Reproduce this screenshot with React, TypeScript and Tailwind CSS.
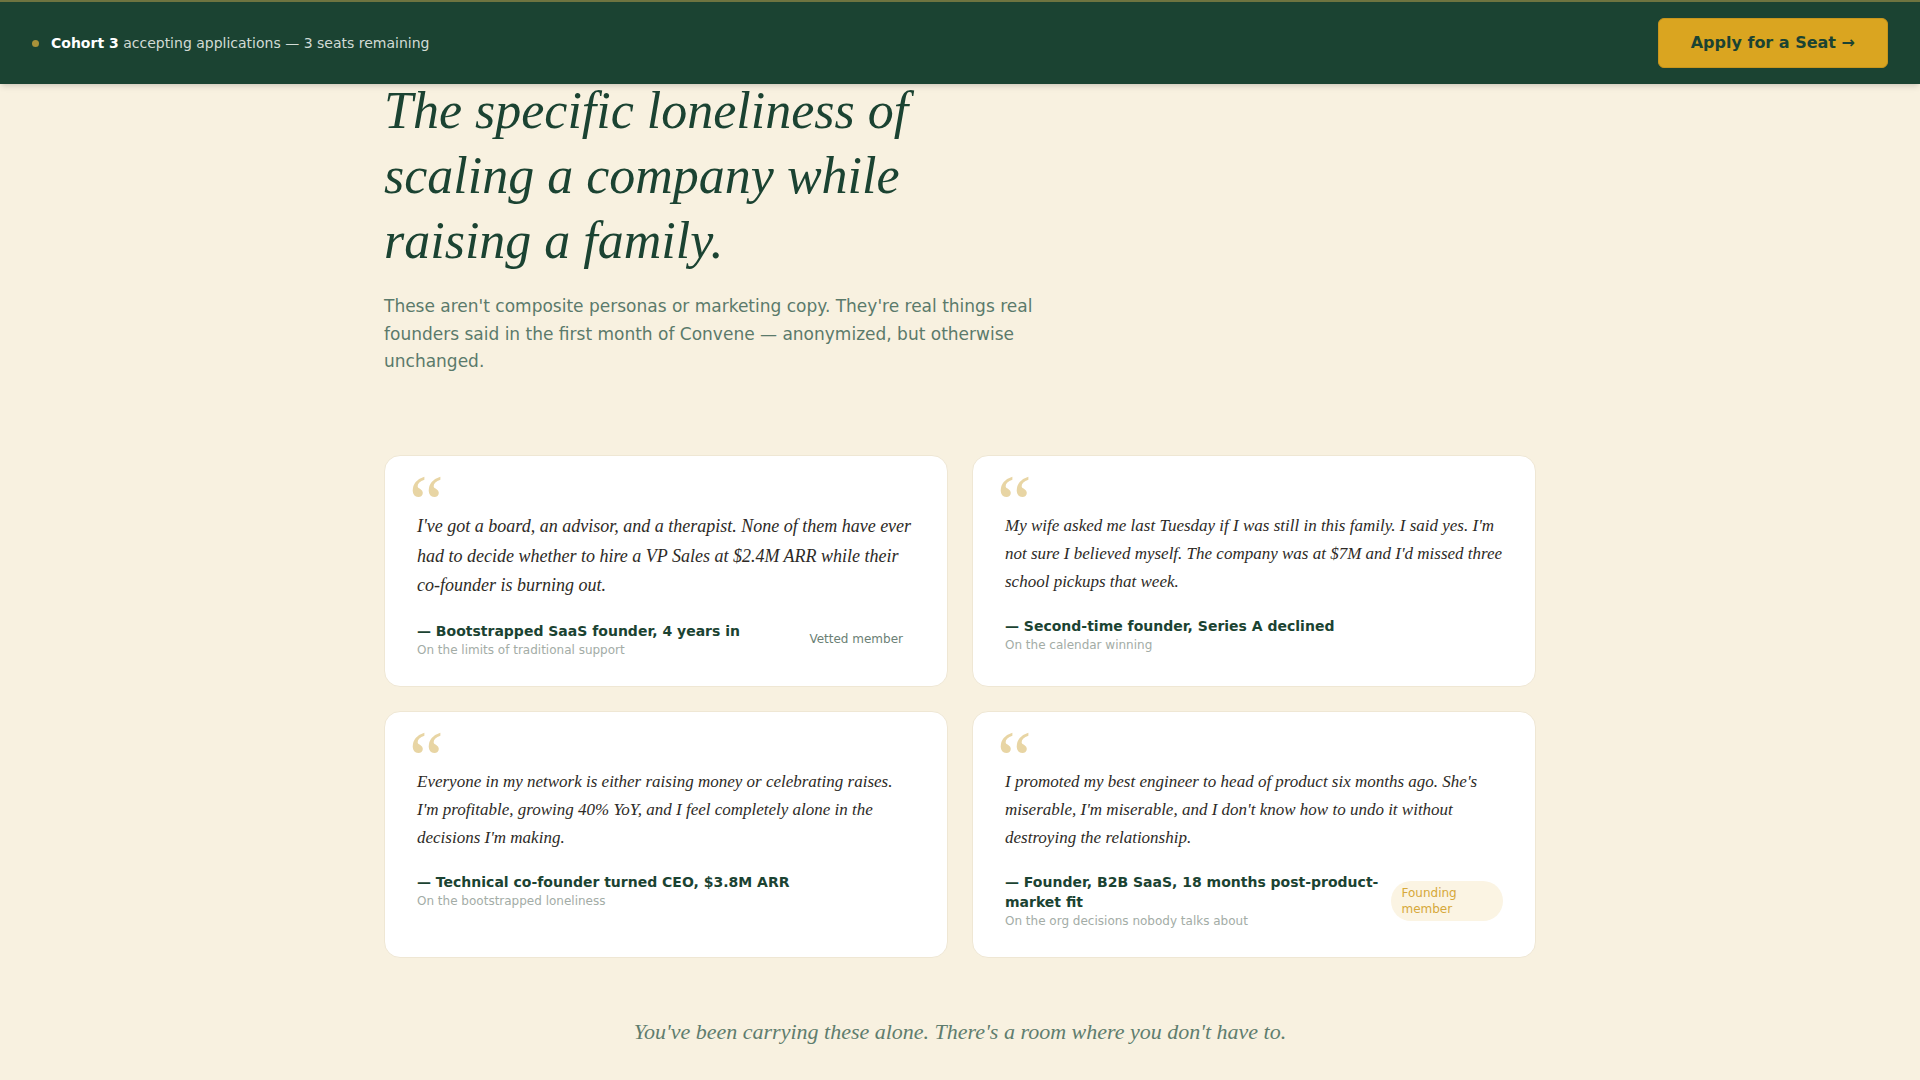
import React from 'react';

type Story = {
  quote: string;
  who: string;
  topic: string;
  badge?: 'vetted' | 'founding';
  featured?: boolean;
};

const stories: Story[] = [
  {
    quote:
      "I've got a board, an advisor, and a therapist. None of them have ever had to decide whether to hire a VP Sales at $2.4M ARR while their co-founder is burning out.",
    who: '— Bootstrapped SaaS founder, 4 years in',
    topic: 'On the limits of traditional support',
    badge: 'vetted',
    featured: true,
  },
  {
    quote:
      "My wife asked me last Tuesday if I was still in this family. I said yes. I'm not sure I believed myself. The company was at $7M and I'd missed three school pickups that week.",
    who: '— Second-time founder, Series A declined',
    topic: 'On the calendar winning',
  },
  {
    quote:
      "Everyone in my network is either raising money or celebrating raises. I'm profitable, growing 40% YoY, and I feel completely alone in the decisions I'm making.",
    who: '— Technical co-founder turned CEO, $3.8M ARR',
    topic: 'On the bootstrapped loneliness',
  },
  {
    quote:
      "I promoted my best engineer to head of product six months ago. She's miserable, I'm miserable, and I don't know how to undo it without destroying the relationship.",
    who: '— Founder, B2B SaaS, 18 months post-product-market fit',
    topic: 'On the org decisions nobody talks about',
    badge: 'founding',
  },
];

const StoryCard = ({ story }: { story: Story }) => {
  return (
    <div className="bg-white rounded-2xl border border-[#efe7d4] px-8 pt-2 pb-7 flex flex-col">
      {/* big decorative quote mark */}
      <div className="h-[48px] -ml-2 font-['Liberation_Serif'] text-[78px] leading-none text-[#e8d5a4] select-none">
        &ldquo;
      </div>
      <p
        className={
          story.featured
            ? "font-['Liberation_Serif'] italic text-[18px] leading-[1.65] text-[#2d2a26]"
            : "font-['Liberation_Serif'] italic text-[17px] leading-[1.65] text-[#2d2a26]"
        }
      >
        {story.quote}
      </p>
      <div className="mt-5 flex items-center justify-between gap-2.5">
        <div>
          <div className="text-sm font-bold text-[#1b4332]">{story.who}</div>
          <div className="mt-px text-xs text-[#a3aca6]">{story.topic}</div>
        </div>
        {story.badge === 'vetted' && (
          <span className="px-3 py-1 rounded-full text-xs text-[#6b7f75]">Vetted member</span>
        )}
        {story.badge === 'founding' && (
          <span className="px-2.5 py-1 rounded-full text-xs leading-4 bg-[#fbf4e3] text-[#d6a83a]">
            Founding member
          </span>
        )}
      </div>
    </div>
  );
};

const App = () => {
  return (
    <div className="min-h-screen bg-[#f8f1e0] font-['DejaVu_Sans',sans-serif]">
      {/* Top bar */}
      <nav className="relative z-10 bg-[#1b4332] border-t-2 border-[#6e7440] shadow-md">
        <div className="px-8 py-4 flex items-center justify-between">
          <div className="flex items-center gap-3 text-sm text-[#d2dbd5]">
            <span className="w-[7px] h-[7px] rounded-full bg-[#a8923a]" />
            <span>
              <span className="font-bold text-white">Cohort 3</span> accepting applications — 3 seats remaining
            </span>
          </div>
          <button className="px-8 py-3 rounded-md bg-[#daa520] border border-[#c8951c] text-[#1b4332] font-bold text-base leading-6">
            Apply for a Seat →
          </button>
        </div>
      </nav>

      <main className="max-w-6xl mx-auto -mt-[6px]">
        <h1 className="max-w-[600px] font-['Liberation_Serif'] italic font-normal text-[52px] leading-[1.25] text-[#1b4332]">
          The specific loneliness of scaling a company while raising a family.
        </h1>
        <p className="mt-5 max-w-2xl text-[17px] leading-[1.625] text-[#5b7a6b]">
          These aren't composite personas or marketing copy. They're real things real founders said in the first
          month of Convene — anonymized, but otherwise unchanged.
        </p>

        <div className="mt-[79px] grid grid-cols-2 gap-6">
          {stories.map((s) => (
            <StoryCard key={s.who} story={s} />
          ))}
        </div>

        <p className="mt-[57px] pb-8 text-center font-['Liberation_Serif'] italic text-[22px] leading-[1.5] text-[#5f7d6e]">
          You've been carrying these alone. There's a room where you don't have to.
        </p>
      </main>
    </div>
  );
};

export default App;
